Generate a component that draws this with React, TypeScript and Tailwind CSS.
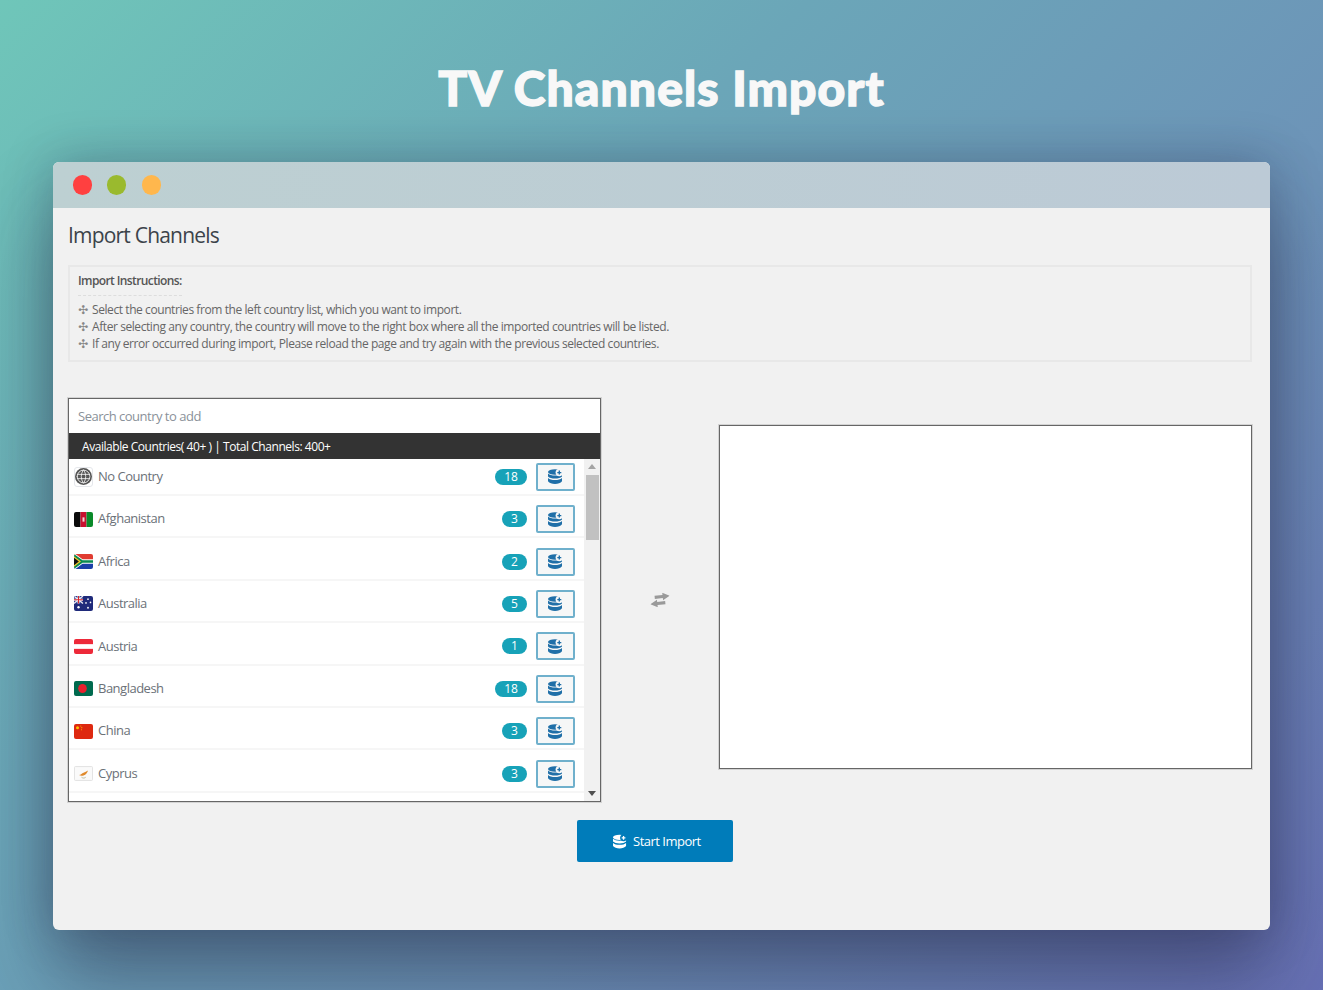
import { TbWorld } from 'react-icons/tb';

const bodyFont = "font-['Open_Sans','Liberation_Sans',sans-serif]";

interface Country {
  name: string;
  count: number;
  flag: React.ReactNode;
}

function DbIcon({ className, cutout, plus }: { className?: string; cutout: string; plus: string }) {
  return (
    <svg viewBox="0 0 15 15" className={className} fill="currentColor">
      <ellipse cx="7" cy="3" rx="7" ry="2.800" />
      <path d="M0 4.600C1.400 6 4 6.600 7 6.600s5.600-.6 7-2v3c-1.400 1.400-4 2-7 2s-5.600-.6-7-2z" />
      <path d="M0 9c1.400 1.400 4 2 7 2s5.600-.6 7-2v3.300C12.600 14 10 15 7 15s-5.600-1-7-2.700z" />
      <circle cx="11.300" cy="3.600" r="3.700" className={cutout} />
      <path d="M10.600 1.600h1.400v1.300h1.300v1.400H12v1.300h-1.400V4.300H9.300V2.900h1.300z" className={plus} />
    </svg>
  );
}

function Flag({ children }: { children: React.ReactNode }) {
  return (
    <svg viewBox="0 0 19 14" preserveAspectRatio="none" className="w-[19px] h-[15px] rounded-[2px] shrink-0">
      {children}
    </svg>
  );
}

const countries: Country[] = [
  {
    name: 'No Country',
    count: 18,
    flag: (
      <span className="w-[19px] h-[20px] rounded-[3px] border border-gray-200 flex items-center justify-center shrink-0">
        <span className="w-[17px] h-[17px] rounded-full bg-[#555] text-white flex items-center justify-center">
          <TbWorld className="w-[17px] h-[17px]" strokeWidth={1.1} />
        </span>
      </span>
    ),
  },
  {
    name: 'Afghanistan',
    count: 3,
    flag: (
      <Flag>
        <rect width="6.500" height="14" fill="#0a0a0a" />
        <rect x="6.500" width="6" height="14" fill="#c8102e" />
        <rect x="12.500" width="6.500" height="14" fill="#0a8a2a" />
        <rect x="8.500" y="5" width="2" height="4" fill="#f3d6d6" />
      </Flag>
    ),
  },
  {
    name: 'Africa',
    count: 2,
    flag: (
      <Flag>
        <rect width="19" height="7" fill="#e03c31" />
        <rect y="7" width="19" height="7" fill="#1a3fa8" />
        <path d="M0-1l8.500 5.800H19v4.400H8.500L0 15z" fill="#fff" />
        <path d="M0 0l8.500 5.800H19v2.400H8.500L0 14z" fill="#0a8a50" />
        <path d="M0 2l7 5-7 5z" fill="#f5c82e" />
        <path d="M0 3.500L4.900 7 0 10.500z" fill="#111" />
      </Flag>
    ),
  },
  {
    name: 'Australia',
    count: 5,
    flag: (
      <Flag>
        <rect width="19" height="14" fill="#1f2a7a" />
        <rect width="9" height="7" fill="#2a3a8e" />
        <path d="M0 0l9 7M9 0L0 7" stroke="#e8e8f0" strokeWidth="1.300" />
        <path d="M4.500 0v7M0 3.500h9" stroke="#fff" strokeWidth="2" />
        <path d="M4.500 0v7M0 3.500h9" stroke="#d8232a" strokeWidth="1" />
        <circle cx="4.500" cy="10.500" r="1.200" fill="#fff" />
        <circle cx="14" cy="3" r=".8" fill="#fff" />
        <circle cx="16.500" cy="6" r=".8" fill="#fff" />
        <circle cx="12" cy="6.500" r=".8" fill="#fff" />
        <circle cx="14" cy="11" r=".9" fill="#fff" />
      </Flag>
    ),
  },
  {
    name: 'Austria',
    count: 1,
    flag: (
      <Flag>
        <rect width="19" height="14" fill="#ed2939" />
        <rect y="4.800" width="19" height="4.400" fill="#fff" />
      </Flag>
    ),
  },
  {
    name: 'Bangladesh',
    count: 18,
    flag: (
      <Flag>
        <rect width="19" height="14" fill="#006a4e" />
        <circle cx="8.500" cy="7" r="4.300" fill="#e8202e" />
      </Flag>
    ),
  },
  {
    name: 'China',
    count: 3,
    flag: (
      <Flag>
        <rect width="19" height="14" fill="#de2910" />
        <circle cx="3.500" cy="3.500" r="1.500" fill="#ffc400" />
        <circle cx="6.800" cy="1.800" r=".5" fill="#ffc400" />
        <circle cx="7.800" cy="3.400" r=".5" fill="#ffc400" />
        <circle cx="7.500" cy="5.400" r=".5" fill="#ffc400" />
      </Flag>
    ),
  },
  {
    name: 'Cyprus',
    count: 3,
    flag: (
      <Flag>
        <rect x=".5" y=".5" width="18" height="13" fill="#fafafa" stroke="#e4e4e4" />
        <path d="M5 8.500c2-.6 3-1.800 4.500-2.300 1.500-.4 3-1 4.500-1.900-.600 2-2 4-4.500 4.600-1.600.4-3.200.3-4.500-.4z" fill="#e08a2c" />
        <path d="M7.500 10.500c1.500 1 3 1 4.200 0" stroke="#9a9a70" strokeWidth=".6" fill="none" />
      </Flag>
    ),
  },
];

const instructions = [
  'Select the countries from the left country list, which you want to import.',
  'After selecting any country, the country will move to the right box where all the imported countries will be listed.',
  'If any error occurred during import, Please reload the page and try again with the previous selected countries.',
];

export default function App() {
  return (
    <div className="min-h-[990px] bg-[linear-gradient(135deg,#6fc6b9_0%,#6ba6b8_35%,#6d93b8_65%,#6770b4_100%)] overflow-hidden">
      <div className="h-[162px] pt-[13px] flex items-center justify-center">
        <h1 className="text-[#f8f8f8] text-[48px] font-black leading-none font-['Lato',sans-serif] tracking-[1.1px] [-webkit-text-stroke:1.4px_#f8f8f8]">
          TV Channels Import
        </h1>
      </div>

      <div className={`mx-[53px] h-[768px] rounded-[6px] overflow-hidden bg-[#f1f1f1] shadow-[0_0_50px_rgba(30,30,60,0.28),0_50px_80px_rgba(30,30,60,0.42)] ${bodyFont}`}>
        <div className="h-[46px] bg-[linear-gradient(90deg,#bdd0d2,#bccad6)] flex items-center gap-[15.5px] pl-[19.5px]">
          <span className="w-[19px] h-[20px] rounded-full bg-[#ff4040]" />
          <span className="w-[19px] h-[20px] rounded-full bg-[#9aba2e]" />
          <span className="w-[19px] h-[20px] rounded-full bg-[#ffb74d]" />
        </div>

        <div className="pl-[15px] pr-[18px]">
          <h2 className="text-[21px] leading-[30px] mt-[12px] text-[#3c434a] tracking-[-0.8px]">Import Channels</h2>

          <div className="mt-[15px] h-[97px] border-2 border-[#e8e8e8] pl-[8px] pt-[5px] text-[12px] text-[#666] tracking-[-0.42px]">
            <div className="font-semibold text-[#555] leading-[17px] w-fit pb-[6px] border-b border-dashed border-[#ddd] tracking-[-0.6px]">
              Import Instructions:
            </div>
            <ul className="mt-[5px]">
              {instructions.map((line) => (
                <li key={line} className="flex items-center gap-[4px] h-[17px] whitespace-nowrap">
                  <span className="text-[#888] text-[12px] w-[10px] font-['DejaVu_Sans',sans-serif]">✣</span>
                  {line}
                </li>
              ))}
            </ul>
          </div>

          <div className="mt-[36px] flex items-start">
            <div className="w-[533px] h-[404px] border border-[#666] shadow-[0_0_0_1px_rgba(0,0,0,0.12)] bg-white flex flex-col overflow-hidden">
              <div className="h-[34px] shrink-0 flex items-center pl-[9px] pt-[2px] text-[13px] text-[#8a9199] tracking-[-0.5px]">
                Search country to add
              </div>
              <div className="h-[26px] shrink-0 bg-[#333] text-white text-[12px] font-medium flex items-center pl-[13px] pt-[1px] tracking-[-0.45px]">
                Available Countries( 40+ ) | Total Channels: 400+
              </div>
              <div className="flex flex-1 min-h-0">
                <div className="flex-1 min-w-0">
                  {countries.map((c, i) => (
                    <div
                      key={c.name}
                      className={`flex items-center border-b-2 border-[#f6f6f6] pl-[5px] pr-[9px] ${
                        i === 0 ? 'h-[37px]' : 'h-[42.4px] pt-[6px]'
                      }`}
                    >
                      <span className="w-[19px] flex justify-center">{c.flag}</span>
                      <span className="ml-[5px] text-[13px] text-[#6b7178] tracking-[-0.5px]">{c.name}</span>
                      <span
                        className={`ml-auto h-[16px] rounded-full bg-[#17a2b8] text-white text-[12px] flex items-center justify-center ${
                          c.count > 9 ? 'w-[32px]' : 'w-[25px]'
                        }`}
                      >
                        {c.count}
                      </span>
                      <button className="ml-[9px] w-[39px] h-[28px] rounded-[2px] border-2 border-[#6fb0cc] bg-[#f6f7f7] flex items-center justify-center text-[#1f6fa8]">
                        <DbIcon className="w-[15px] h-[15px]" cutout="fill-[#f6f7f7]" plus="fill-[#1f6fa8]" />
                      </button>
                    </div>
                  ))}
                </div>
                <div className="w-[16px] shrink-0 bg-[#f1f1f1] flex flex-col items-center pt-[5px]">
                  <span className="w-0 h-0 border-x-[4px] border-x-transparent border-b-[5px] border-b-[#a3a3a3]" />
                  <span className="mt-[6px] w-[13px] h-[65px] bg-[#c1c1c1]" />
                  <span className="mt-auto mb-[5px] w-0 h-0 border-x-[4px] border-x-transparent border-t-[5px] border-t-[#505050]" />
                </div>
              </div>
            </div>

            <div className="flex-1 flex justify-center pt-[195px]">
              <svg viewBox="0 0 20 14" className="w-[20px] h-[14px] text-[#9a9a9a] -rotate-6" fill="currentColor">
                <path d="M13 0l7 3.800-7 3.800V5.400H5V2.200h8z" />
                <path d="M7 6.400L0 10.200 7 14v-2.200h8V8.600H7z" />
              </svg>
            </div>

            <div className="mt-[27px] w-[533px] h-[344px] border border-[#666] shadow-[0_0_0_1px_rgba(0,0,0,0.12)] bg-white" />
          </div>

          <div className="mt-[18px] flex">
            <button className="ml-[509px] w-[156px] h-[42px] rounded-[2px] bg-[#007cba] text-white text-[13px] tracking-[-0.5px] flex items-center gap-[6px] pl-[36px] pt-[1px]">
              <DbIcon className="w-[14px] h-[15px]" cutout="fill-[#007cba]" plus="fill-white" />
              Start Import
            </button>
          </div>
        </div>
      </div>
    </div>
  );
}
